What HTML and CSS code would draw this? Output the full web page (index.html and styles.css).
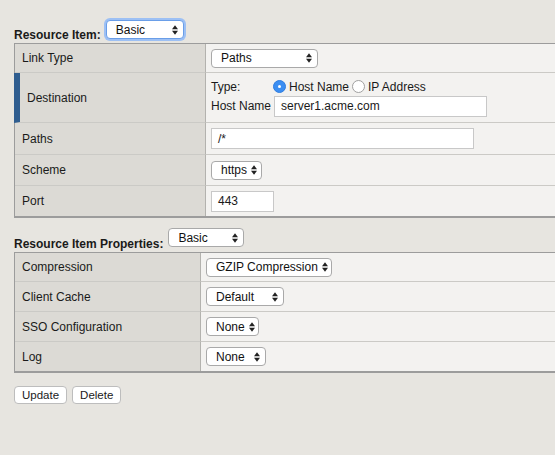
FILE: index.html
```html
<!DOCTYPE html>
<html>
<head>
<meta charset="utf-8">
<link rel="stylesheet" href="styles.css">
</head>
<body>
<div class="page">
  <div class="head head-1">
    <span class="title">Resource Item:</span>
    <span class="sel sel-focus w-basic1">Basic<svg class="arr" viewBox="0 0 7 11"><polygon points="0,4.5 3.5,0 7,4.5"/><polygon points="0,6.5 3.5,11 7,6.5"/></svg></span>
  </div>
  <div class="tbl tbl-1">
    <div class="lbl">Link Type</div>
    <div class="val"><span class="sel w-paths">Paths<svg class="arr" viewBox="0 0 7 11"><polygon points="0,4.5 3.5,0 7,4.5"/><polygon points="0,6.5 3.5,11 7,6.5"/></svg></span></div>

    <div class="lbl lbl-active">Destination</div>
    <div class="val dest">
      <div class="dest-line">
        <span class="dlabel">Type:</span>
        <span class="radio on"></span><span class="rtext">Host Name</span>
        <span class="radio"></span><span class="rtext">IP Address</span>
      </div>
      <div class="dest-line">
        <span class="dlabel2">Host Name</span>
        <span class="inp w-host">server1.acme.com</span>
      </div>
    </div>

    <div class="lbl">Paths</div>
    <div class="val"><span class="inp w-pathsin">/*</span></div>

    <div class="lbl">Scheme</div>
    <div class="val"><span class="sel w-https">https<svg class="arr" viewBox="0 0 7 11"><polygon points="0,4.5 3.5,0 7,4.5"/><polygon points="0,6.5 3.5,11 7,6.5"/></svg></span></div>

    <div class="lbl last">Port</div>
    <div class="val last"><span class="inp w-port">443</span></div>
  </div>

  <div class="head head-2">
    <span class="title">Resource Item Properties:</span>
    <span class="sel w-basic2">Basic<svg class="arr" viewBox="0 0 7 11"><polygon points="0,4.5 3.5,0 7,4.5"/><polygon points="0,6.5 3.5,11 7,6.5"/></svg></span>
  </div>
  <div class="tbl tbl-2">
    <div class="lbl">Compression</div>
    <div class="val"><span class="sel w-gzip">GZIP Compression<svg class="arr" viewBox="0 0 7 11"><polygon points="0,4.5 3.5,0 7,4.5"/><polygon points="0,6.5 3.5,11 7,6.5"/></svg></span></div>

    <div class="lbl">Client Cache</div>
    <div class="val"><span class="sel w-default">Default<svg class="arr" viewBox="0 0 7 11"><polygon points="0,4.5 3.5,0 7,4.5"/><polygon points="0,6.5 3.5,11 7,6.5"/></svg></span></div>

    <div class="lbl">SSO Configuration</div>
    <div class="val"><span class="sel w-none1">None<svg class="arr" viewBox="0 0 7 11"><polygon points="0,4.5 3.5,0 7,4.5"/><polygon points="0,6.5 3.5,11 7,6.5"/></svg></span></div>

    <div class="lbl last">Log</div>
    <div class="val last"><span class="sel w-none2">None<svg class="arr" viewBox="0 0 7 11"><polygon points="0,4.5 3.5,0 7,4.5"/><polygon points="0,6.5 3.5,11 7,6.5"/></svg></span></div>
  </div>

  <div class="buttons">
    <span class="btn">Update</span>
    <span class="btn">Delete</span>
  </div>
</div>
</body>
</html>
```

FILE: styles.css
```css
html, body {
  margin: 0;
  padding: 0;
  overflow: hidden;
  background: #e7e5e0;
}
body {
  width: 555px;
  height: 455px;
  font-family: "Liberation Sans", Arial, sans-serif;
  font-size: 12px;
  color: #1a1a1a;
}
.page {
  padding: 19px 0 0 14px;
}
.head {
  display: flex;
  align-items: flex-end;
  height: 24px;
}
.head-2 { margin-top: 10px; height: 24px; }
.title {
  font-weight: bold;
  font-size: 12px;
  margin-bottom: 1px;
  white-space: nowrap;
}
.head .sel { margin-left: 5px; align-self: flex-start; }

.tbl {
  display: grid;
  width: 560px;
  border-top: 1px solid #9c9c9c;
  border-left: 1px solid #9c9c9c;
  border-bottom: 2px solid #9c9c9c;
  box-sizing: border-box;
}
.tbl-1 { grid-template-columns: 191px 1fr; grid-template-rows: 29px 50px 32px 31px 30px; }
.tbl-2 { grid-template-columns: 186px 1fr; grid-template-rows: 29px 30px 30px 29px; }

.lbl, .val {
  display: flex;
  align-items: center;
  border-bottom: 1px solid #cbcac6;
  box-sizing: border-box;
  white-space: nowrap;
}
.lbl {
  background: #dcdad5;
  border-right: 1px solid #b3b2ae;
  padding-left: 7px;
}
.lbl-active {
  border-left: 6px solid #2f5d8f;
  margin-left: -1px;
  padding-left: 7px;
}
.val {
  background: #f3f2f0;
  padding-left: 5px;
}
.last { border-bottom: none; }

.sel {
  display: inline-flex;
  align-items: center;
  justify-content: space-between;
  box-sizing: border-box;
  height: 19px;
  padding: 0 5px 0 9px;
  background: #fff;
  border: 1px solid #a9a9a9;
  border-radius: 4px;
  font-size: 12px;
  color: #111;
  white-space: nowrap;
}
.sel-focus {
  border-color: #6a9ee8;
  box-shadow: 0 0 0 2px #9dc0f4;
  margin-top: 1px;
}
.arr {
  width: 6px;
  height: 10px;
  fill: #222;
  flex: none;
  margin-left: 4px;
}
.w-basic1 { width: 78px; }
.w-basic2 { width: 76px; }
.w-paths { width: 107px; }
.w-https { width: 51px; }
.w-gzip { width: 126px; }
.w-default { width: 78px; }
.w-none1 { width: 53px; }
.w-none2 { width: 60px; }

.inp {
  display: inline-flex;
  align-items: center;
  box-sizing: border-box;
  height: 21px;
  padding-left: 6px;
  background: #fff;
  border: 1px solid #c8c8c8;
  font-size: 12px;
}
.w-host { width: 213px; }
.w-pathsin { width: 263px; }
.w-port { width: 63px; }

.dest {
  flex-direction: column;
  align-items: flex-start;
  justify-content: center;
  gap: 2px;
  padding-top: 1px;
}
.dest-line {
  display: flex;
  align-items: center;
}
.dlabel { width: 62px; }
.dlabel2 { width: 63px; }
.radio {
  width: 11px;
  height: 11px;
  border-radius: 50%;
  border: 1px solid #a0a0a0;
  background: #fff;
  position: relative;
  flex: none;
}
.radio.on {
  background: #3b8ef2;
  border-color: #2f7de0;
}
.radio.on::after {
  content: "";
  position: absolute;
  left: 4px;
  top: 4px;
  width: 3px;
  height: 3px;
  border-radius: 50%;
  background: #fff;
}
.rtext { margin-left: 3px; font-size: 12px; }
.rtext + .radio { margin-left: 3px; }

.buttons {
  display: flex;
  gap: 5px;
  margin-top: 13px;
}
.btn {
  display: inline-flex;
  align-items: center;
  justify-content: center;
  box-sizing: border-box;
  height: 18px;
  padding: 0 7px;
  background: #fff;
  border: 1px solid #bdbdbd;
  border-radius: 4px;
  font-size: 11.5px;
}
```
